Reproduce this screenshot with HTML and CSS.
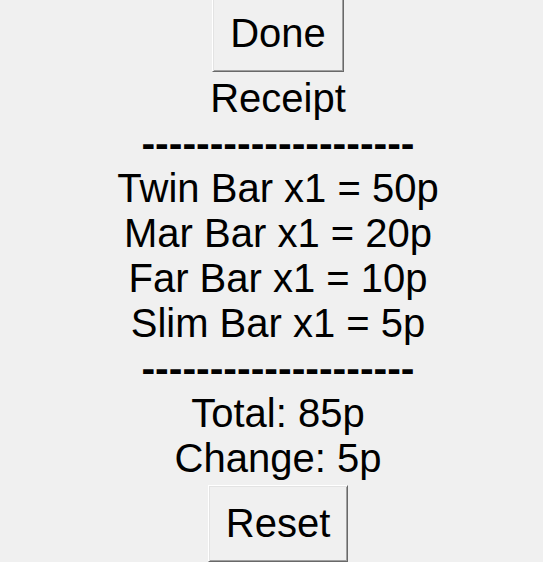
FILE: index.html
```html
<!DOCTYPE html>
<html lang="en">
<head>
<meta charset="utf-8">
<title>Receipt</title>
<link rel="stylesheet" href="styles.css">
</head>
<body>
<main class="window">
  <button class="button" type="button">Done</button>
  <section class="receipt">
    <h1 class="line">Receipt</h1>
    <p class="line divider">--------------------</p>
    <p class="line">Twin Bar x1 = 50p</p>
    <p class="line">Mar Bar x1 = 20p</p>
    <p class="line">Far Bar x1 = 10p</p>
    <p class="line">Slim Bar x1 = 5p</p>
    <p class="line divider">--------------------</p>
    <p class="line">Total: 85p</p>
    <p class="line">Change: 5p</p>
  </section>
  <button class="button" type="button">Reset</button>
</main>
</body>
</html>
```
FILE: styles.css
```css
body {
  margin: 0;
  background: #f0f0f0;
  color: #000;
  font: 40px/45px "Liberation Sans", Arial, sans-serif;
  overflow: hidden;
}

.window {
  display: flex;
  flex-direction: column;
  align-items: center;
  margin-top: -5px;
  padding-left: 13px;
}

.button {
  box-sizing: border-box;
  padding: 15px 17px;
  border: 1px solid;
  border-color: #fff #696969 #696969 #fff;
  box-shadow: inset 1px 1px #e3e3e3, inset -1px -1px #a0a0a0;
  background: #f0f0f0;
  color: inherit;
  font: inherit;
}

.receipt {
  padding: 4px 0;
  text-align: center;
}

.line {
  margin: 0;
  font: inherit;
}

.divider {
  font-size: 41px;
  font-weight: bold;
}
```
